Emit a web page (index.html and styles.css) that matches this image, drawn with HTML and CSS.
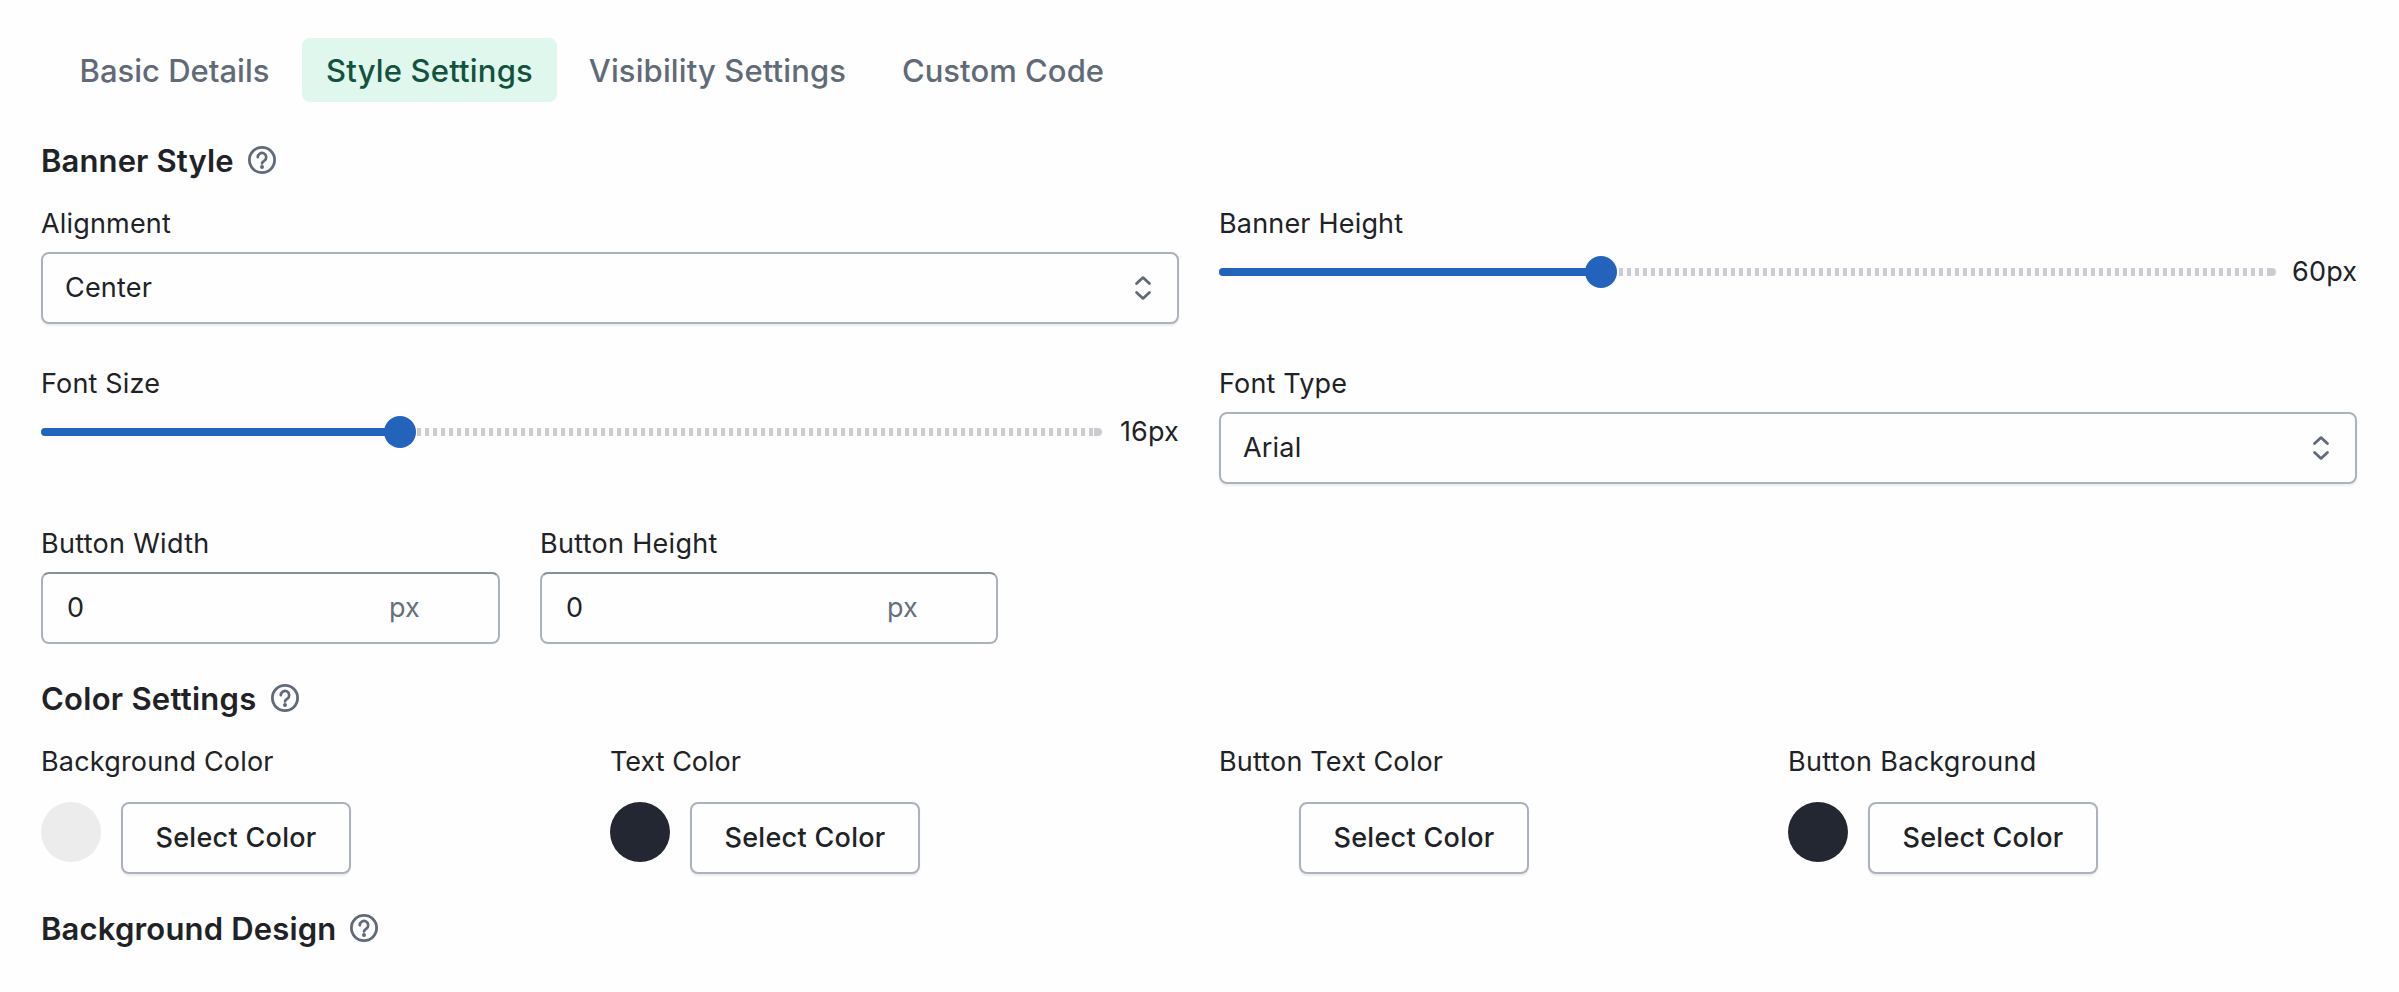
FILE: index.html
```html
<!DOCTYPE html>
<html lang="en">
<head>
<meta charset="utf-8">
<title>Style Settings</title>
<link rel="stylesheet" href="styles.css">
</head>
<body>
<svg class="defs" width="0" height="0" aria-hidden="true">
  <symbol id="help" viewBox="0 0 28 28">
    <circle cx="14" cy="14" r="12.6" fill="none" stroke="currentColor" stroke-width="2.8"/>
    <path d="M9.8 11.2a4.2 4.2 0 1 1 6.6 3.4c-1.5 1-2.4 1.5-2.4 2.9" fill="none" stroke="currentColor" stroke-width="2.7" stroke-linecap="round"/>
    <circle cx="14" cy="21" r="2" fill="currentColor"/>
  </symbol>
  <symbol id="updown" viewBox="0 0 16 24">
    <path d="M1.6 7.6 8 1.6l6.4 6M1.6 16.4l6.4 6 6.4-6" fill="none" stroke="currentColor" stroke-width="2.8" stroke-linecap="round" stroke-linejoin="round"/>
  </symbol>
</svg>
<nav class="tabs">
  <button class="tab t-basic">Basic Details</button>
  <button class="tab t-style active">Style Settings</button>
  <button class="tab t-vis">Visibility Settings</button>
  <button class="tab t-code">Custom Code</button>
</nav>
<main class="panel">
  <section class="section">
    <h2 class="heading"><span class="h-banner">Banner Style</span><svg class="help"><use href="#help"/></svg></h2>
    <div class="grid">
      <div class="field">
        <span class="label">Alignment</span>
        <div class="select"><span>Center</span><svg class="updown"><use href="#updown"/></svg></div>
      </div>
      <div class="field">
        <span class="label">Banner Height</span>
        <div class="range"><div class="track"><div class="fill" style="width:382px"></div><div class="thumb"></div></div><span class="value v-height">60px</span></div>
      </div>
      <div class="field">
        <span class="label">Font Size</span>
        <div class="range"><div class="track"><div class="fill" style="width:359px"></div><div class="thumb"></div></div><span class="value v-size">16px</span></div>
      </div>
      <div class="field">
        <span class="label">Font Type</span>
        <div class="select"><span>Arial</span><svg class="updown"><use href="#updown"/></svg></div>
      </div>
      <div class="pair">
        <div class="field">
          <span class="label wide">Button Width</span>
          <div class="input"><span>0</span><span class="suffix">px</span></div>
        </div>
        <div class="field">
          <span class="label wide">Button Height</span>
          <div class="input"><span>0</span><span class="suffix">px</span></div>
        </div>
      </div>
    </div>
  </section>
  <section class="section">
    <h2 class="heading"><span class="h-color">Color Settings</span><svg class="help"><use href="#help"/></svg></h2>
    <div class="grid">
      <div class="colors">
        <div class="color"><span class="label">Background Color</span><div class="pick"><i class="swatch light"></i><button class="btn">Select Color</button></div></div>
        <div class="color"><span class="label tight">Text Color</span><div class="pick"><i class="swatch dark"></i><button class="btn">Select Color</button></div></div>
      </div>
      <div class="colors">
        <div class="color"><span class="label">Button Text Color</span><div class="pick"><i class="swatch white"></i><button class="btn">Select Color</button></div></div>
        <div class="color"><span class="label wide">Button Background</span><div class="pick"><i class="swatch dark"></i><button class="btn">Select Color</button></div></div>
      </div>
    </div>
  </section>
  <section class="section">
    <h2 class="heading"><span class="h-design">Background Design</span><svg class="help"><use href="#help"/></svg></h2>
  </section>
</main>
</body>
</html>
```
FILE: styles.css
```css
* { box-sizing: border-box; }
body {
  margin: 0;
  padding: 38px 42px 0 41px;
  height: 992px;
  overflow: hidden;
  background: #fefefe;
  color: #202226;
  font: 400 27px/40px Inter, "Liberation Sans", sans-serif;
  letter-spacing: .18px;
}
button { font: inherit; color: inherit; letter-spacing: inherit; margin: 0; }
.defs { display: none; }

.tabs { display: flex; gap: 8px; padding-left: 14px; height: 64px; }
.tab {
  border: 0;
  border-radius: 8px;
  background: none;
  padding: 2px 0 0;
  font-size: 31px;
  font-weight: 500;
  line-height: 62px;
  color: #616a77;
  white-space: nowrap;
}
.active { background: #dff7ec; color: #14523f; }
.t-basic { width: 239px; letter-spacing: 0; }
.t-style { width: 255px; }
.t-vis { width: 305px; letter-spacing: .12px; }
.t-code { width: 250px; letter-spacing: .05px; }

.panel { display: flex; flex-direction: column; gap: 30px; padding-top: 34px; }
.heading {
  display: flex;
  align-items: center;
  gap: 14px;
  height: 48px;
  margin: 0 0 20px;
  font-size: 31px;
  font-weight: 600;
  line-height: 46px;
  white-space: nowrap;
}
.heading span { padding-top: 2px; }
.h-banner { width: 193px; letter-spacing: .12px; }
.h-color { width: 216px; letter-spacing: .27px; }
.h-design { width: 295px; letter-spacing: .18px; }
.help { width: 28px; height: 28px; color: #606a78; flex: none; }

.grid { display: grid; grid-template-columns: 1fr 1fr; gap: 40px; }
.field { display: flex; flex-direction: column; gap: 8px; height: 120px; min-width: 0; }
.label { height: 40px; white-space: nowrap; }
.wide { letter-spacing: .3px; }
.tight { letter-spacing: 0; }
.select, .input {
  display: flex;
  align-items: center;
  justify-content: space-between;
  height: 72px;
  border: 2px solid #abb1bd;
  border-radius: 8px;
  background: #fefefe;
}
.select { padding: 0 26px 0 22px; box-shadow: 0 2px 2px rgba(0,0,0,.07); }
.updown { width: 16px; height: 24px; color: #606a78; }
.pair { display: grid; grid-template-columns: 459px 458px; gap: 40px; }
.input { padding: 0 78px 0 24px; border-top-color: #898f98; }
.suffix { color: #66707d; }

.range { display: flex; align-items: center; justify-content: space-between; height: 40px; }
.track {
  display: flex;
  align-items: center;
  flex: 1;
  height: 8px;
  margin-right: 16px;
  border-radius: 4px;
  background:
    linear-gradient(#c9cdd2, #c9cdd2) right / 8px 8px no-repeat,
    repeating-linear-gradient(90deg, #c9cdd2 0 4px, #fefefe 4px 8px);
}
.fill { height: 8px; border-radius: 4px 0 0 4px; background: #2463bc; }
.thumb { width: 32px; height: 32px; margin-left: -16px; border-radius: 50%; background: #2463bc; }
.value { text-align: right; white-space: nowrap; }
.v-height { width: 65px; }
.v-size { width: 61px; }

.colors { display: grid; grid-template-columns: 1fr 1fr; }
.color { display: flex; flex-direction: column; gap: 20px; }
.pick { display: flex; gap: 20px; height: 72px; }
.swatch { width: 60px; height: 60px; border-radius: 50%; }
.light { background: #ececec; }
.dark { background: #232731; }
.white { background: #fefefe; }
.btn {
  width: 230px;
  height: 72px;
  padding: 0;
  border: 2px solid #abb1bd;
  border-radius: 8px;
  background: #fefefe;
  box-shadow: 0 2px 2px rgba(0,0,0,.07);
  font-weight: 500;
  letter-spacing: .3px;
  white-space: nowrap;
}
```
